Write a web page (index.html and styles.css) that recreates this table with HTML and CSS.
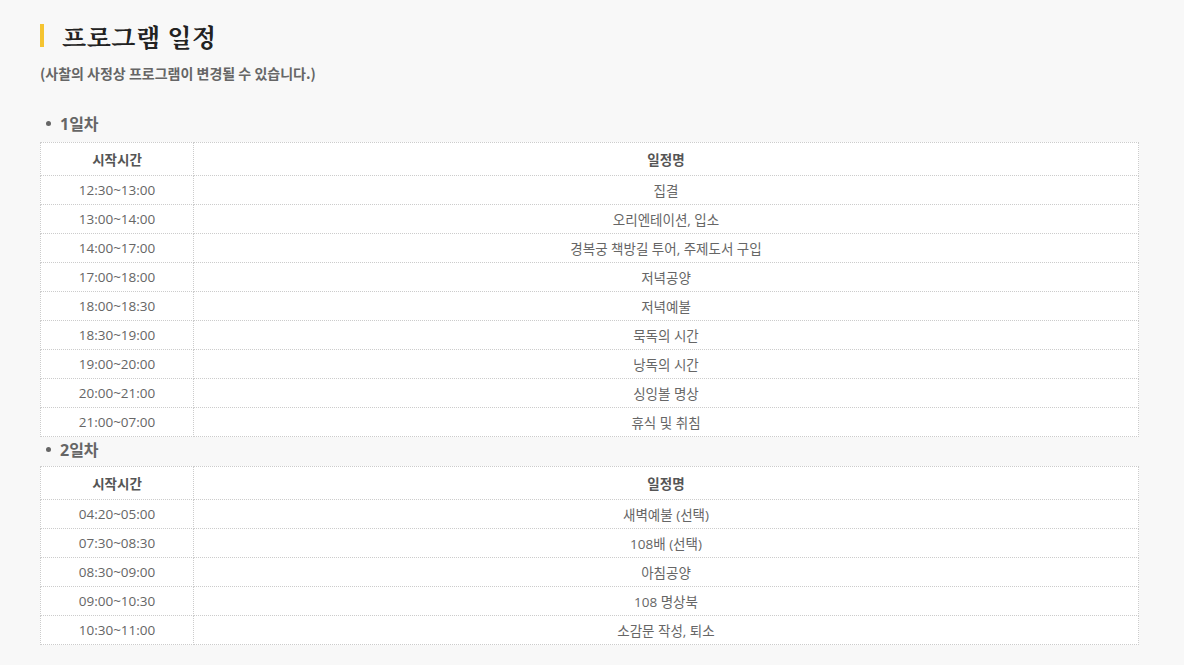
FILE: index.html
```html
<!DOCTYPE html>
<html>
<head>
    <meta charset="utf-8" />
    <title>프로그램 일정</title>
    <link rel="stylesheet" href="styles.css">
</head>
<body>
<div class="schedule">
    <!-- Title -->
    <h2 class="page-title">프로그램 일정</h2>
    <p class="notice">(사찰의 사정상 프로그램이 변경될 수 있습니다.)</p>

    <!-- Day 1 -->
    <div class="day">
        <h3 class="day-title">1일차</h3>
        <table class="timetable">
            <thead>
                <tr><th class="col-time">시작시간</th><th>일정명</th></tr>
            </thead>
            <tbody>
                <tr><td>12:30~13:00</td><td>집결</td></tr>
                <tr><td>13:00~14:00</td><td>오리엔테이션, 입소</td></tr>
                <tr><td>14:00~17:00</td><td>경복궁 책방길 투어, 주제도서 구입</td></tr>
                <tr><td>17:00~18:00</td><td>저녁공양</td></tr>
                <tr><td>18:00~18:30</td><td>저녁예불</td></tr>
                <tr><td>18:30~19:00</td><td>묵독의 시간</td></tr>
                <tr><td>19:00~20:00</td><td>낭독의 시간</td></tr>
                <tr><td>20:00~21:00</td><td>싱잉볼 명상</td></tr>
                <tr><td>21:00~07:00</td><td>휴식 및 취침</td></tr>
            </tbody>
        </table>
    </div>

    <!-- Day 2 -->
    <div class="day">
        <h3 class="day-title">2일차</h3>
        <table class="timetable">
            <thead>
                <tr><th class="col-time">시작시간</th><th>일정명</th></tr>
            </thead>
            <tbody>
                <tr><td>04:20~05:00</td><td>새벽예불 (선택)</td></tr>
                <tr><td>07:30~08:30</td><td>108배 (선택)</td></tr>
                <tr><td>08:30~09:00</td><td>아침공양</td></tr>
                <tr><td>09:00~10:30</td><td>108 명상북</td></tr>
                <tr><td>10:30~11:00</td><td>소감문 작성, 퇴소</td></tr>
            </tbody>
        </table>
    </div>
</div>
</body>
</html>
```

FILE: styles.css
```css
* {
  box-sizing: border-box;
}
body {
  margin: 0;
  padding: 0;
  background-color: #f8f8f8;
  font-family: "Open Sans", "Noto Sans CJK KR", sans-serif;
  color: #555;
}
.schedule {
  padding: 24px 45px 20px 40px;
}
.page-title {
  margin: 0;
  height: 23px;
  display: flex;
  align-items: center;
  border-left: 4px solid #f5c431;
  padding-left: 18px;
  font-family: "Noto Serif CJK KR", "Noto Sans CJK KR", serif;
  font-size: 25px;
  font-weight: bold;
  color: #222;
  letter-spacing: 0.5px;
}
.notice {
  margin: 15px 0 0;
  font-family: "Noto Sans CJK KR", sans-serif;
  font-size: 14px;
  font-weight: bold;
  color: #666;
  line-height: 22px;
}
.day:first-of-type {
  margin-top: 27px;
}
.day-title {
  margin: 0 0 7px;
  display: flex;
  align-items: center;
  height: 24px;
  padding-left: 6px;
  font-size: 16px;
  font-weight: bold;
  color: #666;
}
.day-title:before {
  content: "";
  width: 5px;
  height: 5px;
  border-radius: 50%;
  background-color: #666;
  margin-right: 9px;
}
.day + .day .day-title {
  margin-bottom: 5px;
}
.timetable {
  width: 100%;
  border-collapse: collapse;
  background-color: #fff;
  font-size: 13.5px;
}
.timetable th,
.timetable td {
  border: 1px dotted #ccc;
  text-align: center;
  padding: 0;
}
.timetable th {
  height: 33px;
  font-weight: bold;
  color: #555;
}
.timetable td {
  height: 29px;
  color: #666;
}
.timetable .col-time {
  width: 153px;
}
```
